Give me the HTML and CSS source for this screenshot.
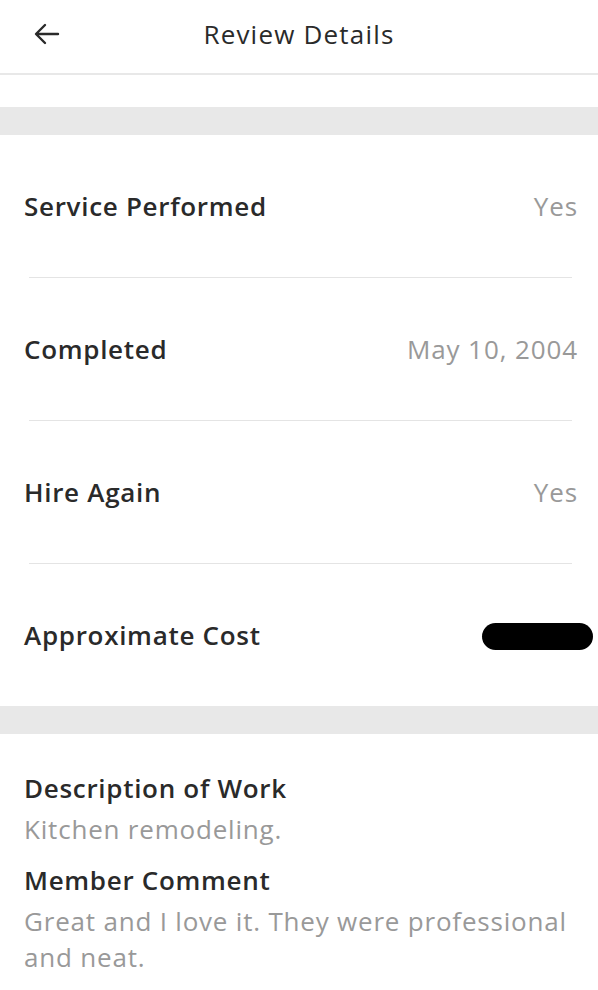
FILE: index.html
```html
<!DOCTYPE html>
<html>
<head>
<meta charset="utf-8">
<link rel="stylesheet" href="styles.css">
</head>
<body>
<div class="app">
  <header class="topbar">
    <svg class="back" width="26" height="22" viewBox="0 0 26 22"><path d="M24 11H2.5M11 2L2 11l9 9" fill="none" stroke="#2a2a2a" stroke-width="2.4" stroke-linecap="round" stroke-linejoin="round"/></svg>
    <h1 class="title">Review Details</h1>
  </header>
  <div class="spacer"></div>
  <div class="band"></div>
  <section class="rows">
    <div class="row"><span class="label">Service Performed</span><span class="value">Yes</span></div>
    <div class="row"><span class="label">Completed</span><span class="value">May 10, 2004</span></div>
    <div class="row"><span class="label">Hire Again</span><span class="value">Yes</span></div>
    <div class="row last"><span class="label">Approximate Cost</span><span class="redact"></span></div>
  </section>
  <div class="band"></div>
  <section class="details">
    <h2 class="dlabel">Description of Work</h2>
    <p class="dtext">Kitchen remodeling.</p>
    <h2 class="dlabel">Member Comment</h2>
    <p class="dtext">Great and I love it. They were professional and neat.</p>
  </section>
</div>
</body>
</html>
```
FILE: styles.css
```css
html, body { margin: 0; padding: 0; background: #fff; }
body { font-family: "Open Sans", "Liberation Sans", sans-serif; color: #2a2a2a; }
.app { width: 598px; overflow: hidden; }
.topbar { height: 75px; box-sizing: border-box; border-bottom: 2px solid #e8e8e8; display: flex; align-items: center; justify-content: center; position: relative; padding-bottom: 6px; }
.back { position: absolute; left: 34px; top: 23px; }
.title { margin: 0; font-size: 26px; font-weight: 500; letter-spacing: 1.2px; }
.spacer { height: 32px; }
.band { height: 28px; background: #e8e8e8; }
.rows { display: flex; flex-direction: column; }
.row { height: 142px; margin: 0 26px 0 29px; border-bottom: 1px solid #e4e4e4; display: flex; align-items: center; justify-content: space-between; }
.row.last { border-bottom: none; }
.label { font-size: 26px; font-weight: 600; letter-spacing: 0.7px; margin-left: -5px; }
.value { font-size: 26px; color: #999; letter-spacing: 0.9px; margin-right: -6px; }
.redact { width: 111px; height: 27px; background: #000; border-radius: 14px; margin-right: -21px; margin-top: 2px; }
.details { padding: 34px 24px 20px; }
.dlabel { margin: 0; font-size: 26px; font-weight: 600; letter-spacing: 0.7px; line-height: 40px; }
.dtext { margin: 3px 0 13px; font-size: 26px; color: #999; letter-spacing: 0.8px; line-height: 36px; }
```
